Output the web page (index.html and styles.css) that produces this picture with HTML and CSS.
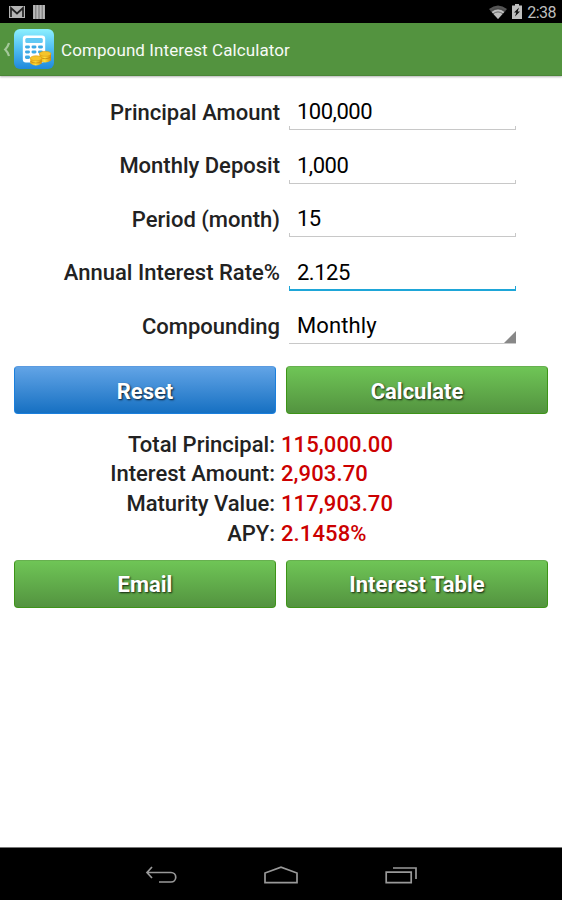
FILE: index.html
```html
<!DOCTYPE html>
<html lang="en">
<head>
  <meta charset="UTF-8" />
  <meta name="viewport" content="width=device-width, initial-scale=1" />
  <title>Compound Interest Calculator</title>
  <link rel="stylesheet" href="styles.css">
</head>
<body>
  <div class="status-bar">
    <div class="status-left">
      <svg width="16" height="12" viewBox="0 0 16 12">
        <rect width="16" height="12" fill="#b4b4b4" />
        <path d="M2 11V2l6 5.5L14 2v9" fill="none" stroke="#222" stroke-width="1.7" />
      </svg>
      <svg width="12" height="14" viewBox="0 0 12 14">
        <rect width="12" height="14" fill="#777" />
        <path d="M1.2 0v14M4.4 0v14M7.6 0v14M10.8 0v14" stroke="#b8b8b8" stroke-width="2.1" />
      </svg>
    </div>
    <div class="status-right">
      <svg width="18" height="14" viewBox="0 0 18 14">
        <path d="M0 4Q9-3 18 4L9 14z" fill="#555" />
        <path d="M2.6 7Q9 2.2 15.4 7L9 14z" fill="#bebebe" />
        <path d="M1.6 6.2Q9 .6 16.4 6.2M4 8.8Q9 5 14 8.8" fill="none" stroke="#444" stroke-width=".7" />
      </svg>
      <svg class="battery" width="10" height="15" viewBox="0 0 10 15">
        <path d="M3 0h4v1.5h3V15H0V1.5h3z" fill="#bebebe" />
        <path d="M7 3.5L2 8.5h2.3L3 12.5l5-5H5.7z" fill="#111" />
      </svg>
      <span class="clock">2:38</span>
    </div>
  </div>

  <header>
    <svg class="back" width="7" height="15" viewBox="0 0 7 15">
      <path d="M6 1Q4.8 5 2.2 7.5Q4.8 10 6 14" fill="none" stroke="#a5c99b" stroke-width="2.2" />
    </svg>
    <svg class="app-icon" width="40" height="40" viewBox="0 0 40 40">
      <defs>
        <linearGradient id="sky" x1="0" y1="0" x2="0" y2="1">
          <stop offset="0" stop-color="#8df0ff" />
          <stop offset=".5" stop-color="#4fbdf2" />
          <stop offset="1" stop-color="#2089dc" />
        </linearGradient>
        <linearGradient id="gold" x1="0" y1="0" x2="1" y2="0">
          <stop offset="0" stop-color="#e6a412" />
          <stop offset=".45" stop-color="#ffe03c" />
          <stop offset="1" stop-color="#d78c08" />
        </linearGradient>
      </defs>
      <rect width="40" height="40" rx="6" fill="url(#sky)" />
      <rect x="8.8" y="6.4" width="22.4" height="27" rx="3" fill="#fff" />
      <rect x="11.3" y="9" width="17.5" height="5" rx="1.5" fill="#62c9f4" />
      <g fill="#3da9e4">
        <rect x="11" y="16.5" width="5" height="3" rx="1.4" />
        <rect x="17.5" y="16.5" width="5" height="3" rx="1.4" />
        <rect x="24" y="16.5" width="5" height="3" rx="1.4" />
        <rect x="11" y="21.5" width="5" height="3" rx="1.4" />
        <rect x="17.5" y="21.5" width="5" height="3" rx="1.4" />
        <rect x="24" y="21.5" width="5" height="3" rx="1.4" />
        <rect x="11" y="26.5" width="5" height="3.5" rx="1.4" />
      </g>
      <path d="M25.5 25v6.5q5.5 4 11.5 0V25z" fill="url(#gold)" />
      <path d="M25.5 28q5.5 3.5 11.5 0" fill="none" stroke="#c88a0c" stroke-width=".8" />
      <ellipse cx="31.2" cy="24.8" rx="5.8" ry="2.5" fill="#f5c52c" stroke="#dc9c10" stroke-width=".6" />
      <path d="M16.3 29.5v5q5.5 4 11.5 0v-5z" fill="url(#gold)" />
      <path d="M16.3 32.3q5.5 3.5 11.5 0" fill="none" stroke="#c88a0c" stroke-width=".8" />
      <ellipse cx="22" cy="29.3" rx="5.8" ry="2.5" fill="#f5c52c" stroke="#dc9c10" stroke-width=".6" />
    </svg>
    <h1>Compound Interest Calculator</h1>
  </header>

  <main>
    <form>
      <div class="row">
        <label>Principal Amount</label>
        <div class="field">100,000</div>
      </div>
      <div class="row">
        <label>Monthly Deposit</label>
        <div class="field">1,000</div>
      </div>
      <div class="row">
        <label>Period (month)</label>
        <div class="field">15</div>
      </div>
      <div class="row">
        <label>Annual Interest Rate%</label>
        <div class="field focused">2.125</div>
      </div>
      <div class="row">
        <label>Compounding</label>
        <div class="field spinner">Monthly</div>
      </div>
    </form>

    <div class="buttons">
      <button type="button" class="blue">Reset</button>
      <button type="button">Calculate</button>
    </div>

    <div class="results">
      <span>Total Principal:</span><strong>115,000.00</strong>
      <span>Interest Amount:</span><strong>2,903.70</strong>
      <span>Maturity Value:</span><strong>117,903.70</strong>
      <span>APY:</span><strong>2.1458%</strong>
    </div>

    <div class="buttons">
      <button type="button">Email</button>
      <button type="button">Interest Table</button>
    </div>
  </main>

  <footer>
    <svg width="32" height="18" viewBox="0 0 32 18">
      <path d="M7 1L2 6.5L7 12M2 6.5H26a4.7 4.7 0 0 1 0 9.5H14" />
    </svg>
    <svg width="34" height="18" viewBox="0 0 34 18">
      <path d="M1 16.7V7L17 1.2L33 7v9.7z" />
    </svg>
    <svg width="32" height="18" viewBox="0 0 32 18">
      <path d="M1.2 6.2h25v10.5h-25zM8 2h23v11" />
    </svg>
  </footer>
</body>
</html>
```
FILE: styles.css
```css
* {
  box-sizing: border-box;
}

body {
  font-family: Roboto, sans-serif;
  background-color: #fff;
  margin: 0;
  height: 900px;
  display: flex;
  flex-direction: column;
  color: #222;
  overflow: hidden;
}

.status-bar {
  height: 23px;
  background-color: #000;
  display: flex;
  justify-content: space-between;
  padding: 0 6px 0 9px;
}

.status-left, .status-right {
  display: flex;
  align-items: center;
}

.status-left {
  gap: 8px;
}

.battery {
  margin: 0 5px;
}

.clock {
  color: #bebebe;
  font-size: 16px;
  line-height: 24px;
  letter-spacing: -0.5px;
  padding-top: 2px;
}

header {
  height: 53px;
  background-color: #53933f;
  border-bottom: 1px solid #4b8638;
  box-shadow: 0 1px 2px rgba(0,0,0,0.3);
  display: flex;
  align-items: center;
  padding-left: 3px;
}

.app-icon {
  margin-left: 4px;
}

h1 {
  margin: 2px 0 0 7px;
  color: #f7faf6;
  font-size: 17px;
  font-weight: 400;
  letter-spacing: 0.1px;
}

main {
  flex: 1;
  padding: 10px 14px 0;
}

.row {
  height: 53.5px;
  display: flex;
  align-items: center;
}

label {
  width: 266px;
  padding-bottom: 1px;
  text-align: right;
  font-size: 22px;
  font-weight: 500;
}

.field {
  position: relative;
  width: 227px;
  height: 35px;
  margin-left: 9px;
  padding-left: 8px;
  border-bottom: 1px solid #c8c8c8;
  color: #000;
  font-size: 22px;
  line-height: 34px;
  letter-spacing: -0.5px;
}

/* short upright ends of the underline */
.field::before {
  content: "";
  position: absolute;
  left: 0;
  right: 0;
  bottom: 0;
  height: 3px;
  border: solid #c8c8c8;
  border-width: 0 1px;
}

.focused {
  border-bottom: 2px solid #1ea6d8;
}

.focused::before {
  border-color: #1ea6d8;
}

.spinner {
  letter-spacing: 0.1px;
}

.spinner::before {
  display: none;
}

.spinner::after {
  content: "";
  position: absolute;
  right: 0;
  bottom: 0;
  border-left: 12px solid transparent;
  border-bottom: 12px solid #888;
}

.buttons {
  display: flex;
  gap: 10px;
}

form + .buttons {
  margin-top: 12.5px;
}

button {
  flex: 1;
  height: 48px;
  padding: 2px 0 0;
  background: linear-gradient(#6fc556, #53933f);
  border: 1px solid #3d9418;
  border-top-color: #67b050;
  border-radius: 4px;
  color: #fff;
  font-family: inherit;
  font-size: 22px;
  font-weight: 700;
  text-shadow: 1px 1px 2px rgba(0,0,0,0.8);
}

.blue {
  background: linear-gradient(#62a4e6, #1670c2);
  border-color: #1a7fdc;
  border-top-color: #5b9be0;
}

.results {
  display: grid;
  grid-template-columns: 261px 1fr;
  column-gap: 6px;
  grid-auto-rows: 29.6px;
  align-items: center;
  margin: 15.5px 0 12px;
  font-size: 22px;
  font-weight: 500;
}

.results span {
  text-align: right;
}

.results strong {
  color: #c00;
  font-weight: 500;
  letter-spacing: 0.1px;
}

footer {
  height: 53px;
  padding-top: 2px;
  background-color: #000;
  border-top: 1px solid #777;
  display: flex;
  justify-content: center;
  align-items: center;
  gap: 87px;
}

footer path {
  fill: none;
  stroke: #999;
  stroke-width: 1.7;
}
```
